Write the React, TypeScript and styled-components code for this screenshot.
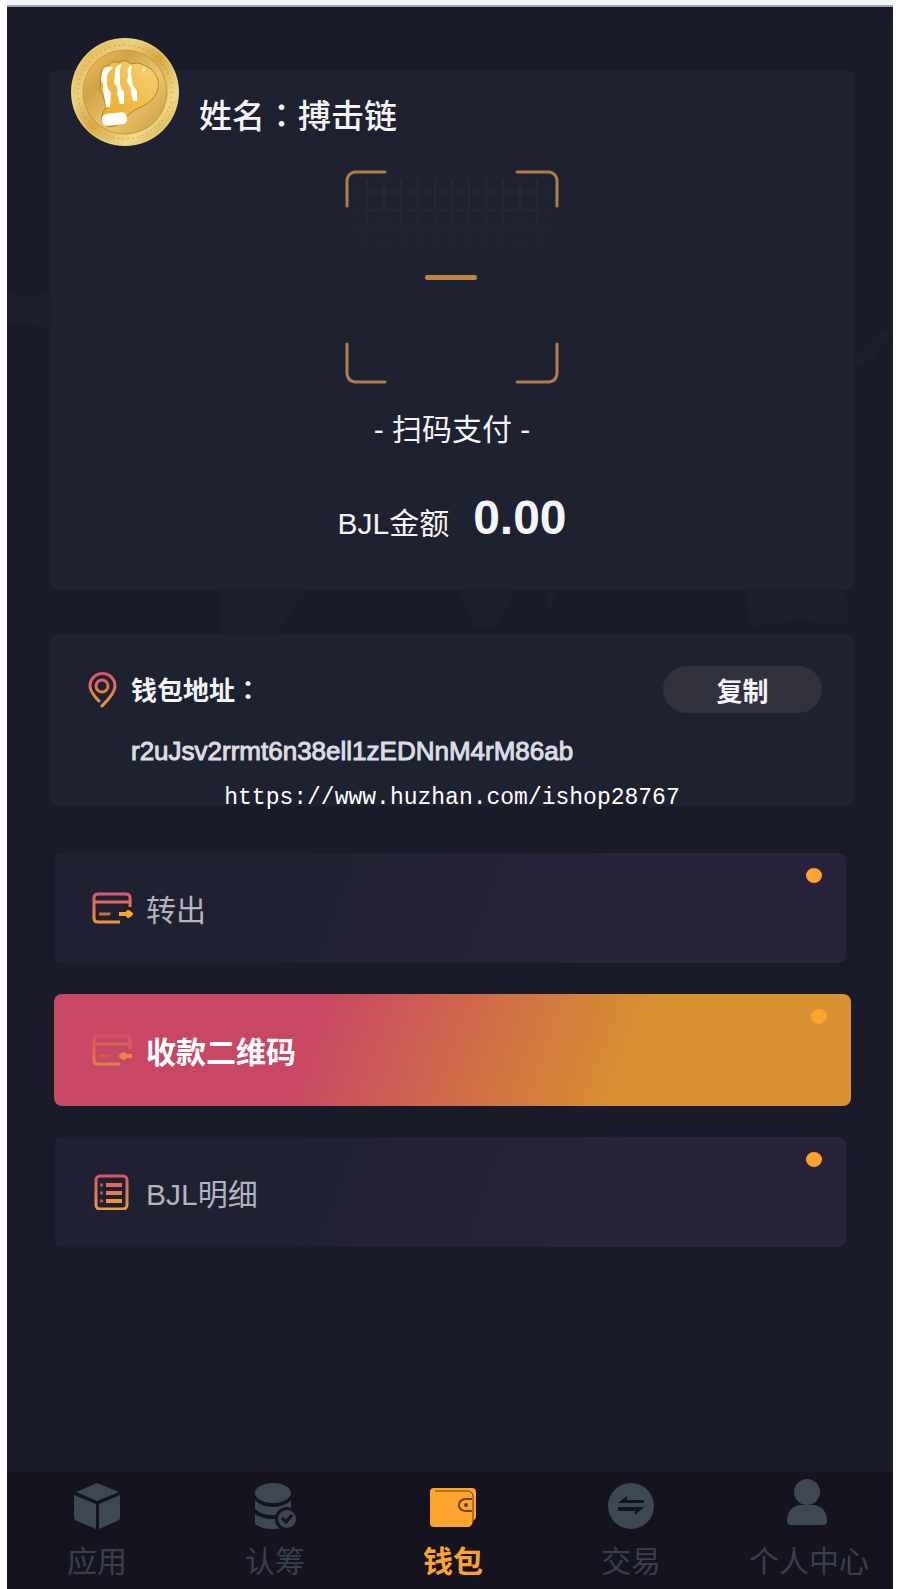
import React from 'react'
import styled, { createGlobalStyle, css } from 'styled-components';

const Theme = {
  colors: {
    bg: '#1a1b29',
    card: '#1e212f',
    bar: '#14131f',
    pill: '#32323e',
    map: '#1c1e2c',
    text: '#f4f4f8',
    address: '#dcdce4',
    muted: '#b4b4bd',
    tab: '#3e4853',
    label: '#36404c',
    orange: '#fca42e',
    frame: '#b07d42',
    pink: '#d9506a',
  },
  font: {
    base: '"Liberation Sans", "Noto Sans CJK SC", sans-serif',
    mono: '"Liberation Mono", monospace',
    small: '26px',
    medium: '30px',
    large: '33px',
    xlarge: '48px',
  },
}

const GlobalStyle = createGlobalStyle`
  * {
    box-sizing: border-box;
  }

  body {
    margin: 0;
    background: #fdfdfe;
    font-family: ${Theme.font.base};
    color: ${Theme.colors.text};
  }

  button {
    border: 0;
    padding: 0;
    font-family: inherit;
    color: inherit;
    cursor: pointer;
  }
`

const Page = styled.div`
  display: flex;
  flex-direction: column;
  min-height: 100vh;
  padding: 0 7px;
`

const TopStrip = styled.div`
  height: 7px;
  background: #f3f4f5;
  border-bottom: 2px solid #9fa5ae;
`

const Screen = styled.main`
  position: relative;
  display: flex;
  flex: 1;
  flex-direction: column;
  background: ${Theme.colors.bg};
`

const MapArt = styled.svg`
  position: absolute;
  top: 0;
  left: 0;
  width: 100%;
  fill: ${Theme.colors.map};
`

const Content = styled.div`
  position: relative;
  display: flex;
  flex: 1;
  flex-direction: column;
  gap: 44px;
  padding: 63px 39px 32px 43px;
`

const Card = styled.section`
  position: relative;
  border-radius: 7px;
  background: ${Theme.colors.card};
`

const PayCard = styled(Card)`
  display: flex;
  flex-direction: column;
  align-items: center;
  padding-bottom: 36px;
`

const Profile = styled.div`
  display: flex;
  align-self: stretch;
  gap: 20px;
  margin-top: -32px;
  padding-left: 21px;
`

const Coin = styled.svg`
  width: 108px;
  height: 108px;
`

const Name = styled.h1`
  margin: 0;
  padding-top: 52px;
  font-size: ${Theme.font.large};
  font-weight: 500;
  line-height: 48px;
`

const Colon = styled.span`
  font-family: "Noto Sans CJK TC", sans-serif;
`

const Scan = styled.svg`
  width: 214px;
  height: 214px;
  margin-top: 24px;
`

const ScanText = styled.p`
  margin: 26px 0 0;
  font-size: ${Theme.font.medium};
  line-height: 40px;
`

const Amount = styled.p`
  display: flex;
  align-items: baseline;
  gap: 24px;
  margin: 38px 0 0;
  font-size: ${Theme.font.medium};
  line-height: 60px;
`

const AmountValue = styled.strong`
  font-size: ${Theme.font.xlarge};
`

const AddressCard = styled(Card)`
  padding: 32px 32px 36px 38px;
`

const AddressHead = styled.div`
  display: flex;
  align-items: center;
  gap: 14px;
`

const PinIcon = styled.svg`
  width: 29px;
  height: 36px;
`

const AddressTitle = styled.h2`
  flex: 1;
  margin: 0;
  font-size: ${Theme.font.small};
  font-weight: 700;
  line-height: 40px;
`

const CopyButton = styled.button`
  width: 159px;
  height: 47px;
  border-radius: 24px;
  background: ${Theme.colors.pill};
  font-size: ${Theme.font.small};
  font-weight: 700;
`

const Address = styled.p`
  margin: 20px 0 0;
  padding-left: 43px;
  font-size: ${Theme.font.small};
  line-height: 37px;
  overflow-wrap: anywhere;
  color: ${Theme.colors.address};
  -webkit-text-stroke: 1px ${Theme.colors.address};
`

const Watermark = styled.span`
  position: absolute;
  right: 0;
  bottom: -8px;
  left: 0;
  font-family: ${Theme.font.mono};
  font-size: 23px;
  line-height: 32px;
  text-align: center;
  color: #fff;
`

const Menu = styled.div`
  display: flex;
  flex-direction: column;
  gap: 31px;
  margin-top: 3px;
  padding: 0 8px 0 4px;
`

const MenuItem = styled.button<{ $active?: boolean }>`
  position: relative;
  display: flex;
  align-items: center;
  gap: 12px;
  height: 110px;
  padding-left: 38px;
  border-radius: 8px;
  background: linear-gradient(110deg, #1f2032 30%, #29223b 72%);
  font-size: ${Theme.font.medium};
  color: ${Theme.colors.muted};

  &::after {
    content: '';
    position: absolute;
    top: 15px;
    right: 24px;
    width: 16px;
    height: 15px;
    border-radius: 50%;
    background: ${Theme.colors.orange};
  }

  ${({ $active }) => $active && css`
    height: 112px;
    margin-right: -5px;
    background: linear-gradient(110deg, #c84763 32%, #d99030 72%);
    font-weight: 700;
    color: #fff;
  `}
`

const MenuIcon = styled.svg<{ $faded?: boolean }>`
  width: 42px;
  height: 36px;
  fill: none;
  stroke: url(#warm);
  stroke-width: 3;
  opacity: ${({ $faded }) => ($faded ? 0.7 : 1)};
`

const TabBar = styled.nav`
  position: relative;
  display: flex;
  justify-content: space-between;
  height: 117px;
  padding: 6px 24px 0 30px;
  background: ${Theme.colors.bar};
`

const Tab = styled.a<{ $active?: boolean }>`
  display: flex;
  flex-direction: column;
  align-items: center;
  width: 120px;
  font-size: ${Theme.font.medium};
  font-weight: ${({ $active }) => ($active ? 700 : 400)};
  line-height: 44px;
  text-decoration: none;
  white-space: nowrap;
  color: ${({ $active }) => ($active ? Theme.colors.orange : Theme.colors.label)};
`

const TabIcon = styled.svg<{ $active?: boolean }>`
  width: 48px;
  height: 54px;
  margin-bottom: 8px;
  fill: ${({ $active }) => ($active ? Theme.colors.orange : Theme.colors.tab)};
`

function WorldMap() {
  return (
    <MapArt viewBox="0 0 886 660" aria-hidden="true">
      <path d="M0 284 L22 290 L43 284 L70 230 L180 205 L300 215 L330 260 L280 330 L240 370 L190 430 L140 390 L90 300 L43 324 L20 316 L0 318Z" />
      <path d="M190 500 L250 520 L308 570 L298 590 L280 610 L262 650 L232 646 L214 626 L212 580Z" />
      <path d="M400 440 L460 420 L530 470 L510 570 L500 604 L484 622 L466 620 L452 582Z" />
      <path d="M540 590 L545 566 L552 570 L546 602 L538 606Z" />
      <path d="M738 584 L780 560 L830 572 L844 600 L838 620 L790 612 L744 622Z" />
      <path d="M848 350 L866 330 L886 318 L886 326 L868 350 L850 360Z" />
    </MapArt>
  )
}

function CoinLogo() {
  return (
    <Coin viewBox="0 0 108 108" aria-hidden="true">
      <defs>
        <linearGradient id="rim" x1="0" y1="0" x2="1" y2="1">
          <stop offset="0" stopColor="#d9aa45" />
          <stop offset="0.3" stopColor="#ecd07c" />
          <stop offset="0.5" stopColor="#d8a843" />
          <stop offset="0.75" stopColor="#f0da86" />
          <stop offset="1" stopColor="#c39132" />
        </linearGradient>
        <linearGradient id="face" x1="0" y1="0" x2="1" y2="1">
          <stop offset="0" stopColor="#e9c763" />
          <stop offset="0.3" stopColor="#d2a347" />
          <stop offset="0.6" stopColor="#e8c86e" />
          <stop offset="1" stopColor="#c9963c" />
        </linearGradient>
        <linearGradient id="fist" x1="0" y1="1" x2="1" y2="0">
          <stop offset="0" stopColor="#f0a51f" />
          <stop offset="1" stopColor="#f2d477" />
        </linearGradient>
      </defs>
      <circle cx="54" cy="54" r="54" fill="url(#rim)" />
      <circle cx="54" cy="54" r="53" fill="none" stroke="#ecd58a" strokeWidth="1" />
      <circle cx="54" cy="54" r="47" fill="none" stroke="#a97c2c" strokeWidth="1" strokeDasharray="1 4" />
      <circle cx="54" cy="54" r="42" fill="url(#face)" stroke="#c39a45" strokeWidth="1" />
      <path
        d="M30 36 Q30 27 38 27 Q42 22 48 25 Q54 20 60 26 L66 25 Q77 27 83 34 Q90 43 86 54 Q82 63 72 68 Q62 72 56 78 Q54 88 37 89 Q28 84 32 74 L35 69 Q33 58 29 52Z"
        fill="url(#fist)" stroke="#b5822f" strokeWidth="1"
      />
      <g fill="#fff">
        <path d="M42 30Q34 27 31 34L30 42Q33 47 32 51L35 69H39L40 55Q35 49 36 42Q35 34 42 30Z" />
        <path d="M50 26Q43 28 44 37L43 45Q48 50 46 55L49 66H53V54Q48 49 49 41Q48 34 50 26Z" />
        <path d="M61 27Q55 29 57 37L56 44Q61 50 60 55L62 63H66V53Q61 48 61 42Q59 35 61 27Z" />
      </g>
      <rect x="31" y="75" width="25" height="12" rx="5" fill="#fff" transform="rotate(-6 44 81)" />
      <path d="M73 29v6M71 32h4" stroke="#fff5cf" strokeWidth="1" />
    </Coin>
  )
}

function ScanFrame() {
  const columns = Array.from({ length: 11 }, (_, i) => 22 + i * 17)
  const rows = [22, 40, 57, 74, 91]

  return (
    <Scan viewBox="0 0 214 214" role="img" aria-label="扫码支付">
      <defs>
        <linearGradient id="fade" x1="0" y1="0" x2="0" y2="1">
          <stop offset="0" stopColor="#fff" />
          <stop offset="1" stopColor="#fff" stopOpacity="0" />
        </linearGradient>
        <mask id="gridMask">
          <rect x="8" y="8" width="198" height="96" fill="url(#fade)" />
        </mask>
      </defs>
      <g stroke="#2c272f" strokeWidth="2" mask="url(#gridMask)">
        {columns.map(x => <line key={x} x1={x} x2={x} y1="10" y2="100" />)}
        {rows.map(y => <line key={y} x1="10" x2="204" y1={y} y2={y} />)}
      </g>
      <g fill="none" stroke={Theme.colors.frame} strokeWidth="3" strokeLinecap="round">
        <path d="M2 36V10Q3 3 10 2H40" />
        <path d="M172 2H204Q211 3 212 10V36" />
        <path d="M2 174V204Q3 211 10 212H40" />
        <path d="M172 212H204Q211 211 212 204V174" />
      </g>
      <rect x="80" y="105" width="52" height="5" rx="2" fill="#bd8440" />
    </Scan>
  )
}

function CardIcon({ incoming }: { incoming?: boolean }) {
  return (
    <MenuIcon viewBox="0 0 42 36" $faded={incoming} aria-hidden="true">
      <path d="M38 17V8Q38 4 34 4H6Q2 4 2 8V28Q2 32 6 32H28" />
      <path d="M2 12H38V13" />
      <path d="M7 24H17V25" stroke="#c8703f" />
      <g stroke={Theme.colors.orange} strokeLinejoin="round">
        {incoming
          ? <path d="M40 24H29M32 22L29 24L32 26Z" strokeWidth="4" />
          : <path d="M27 24H39M36 22L39 24L36 26Z" strokeWidth="4" />}
      </g>
    </MenuIcon>
  )
}

function ListIcon() {
  return (
    <MenuIcon viewBox="0 0 42 36" aria-hidden="true">
      <rect x="4" y="2" width="31" height="33" rx="4" />
      <g strokeWidth="4">
        <path d="M14 11H30" stroke="#dc6a60" />
        <path d="M14 19H30" stroke="#e27f52" />
        <path d="M14 27H30" stroke="#e8953f" />
      </g>
      <path d="M8 11H11M8 19H11M8 27H11" stroke="#a85b50" />
    </MenuIcon>
  )
}

const menuItems = [
  { label: '转出', icon: <CardIcon /> },
  { label: '收款二维码', icon: <CardIcon incoming />, active: true },
  { label: 'BJL明细', icon: <ListIcon /> },
]

const { bar } = Theme.colors

const tabs = [
  {
    label: '应用',
    icon: <>
      <path d="M24 5L46 14L24 23L3 14Z" />
      <path d="M1 17L23 26V51L4 43Q1 42 1 39Z" />
      <path d="M47 17L26 26V51L44 43Q47 42 47 39Z" />
    </>,
  },
  {
    label: '认筹',
    icon: <>
      <ellipse cx="22" cy="15" rx="18" ry="10" />
      <path d="M4 22Q10 29 22 29T40 22V31Q34 37 22 37T4 31Z" />
      <path d="M4 36Q10 41 22 41T40 36V46Q34 51 22 51T4 46Z" />
      <circle cx="36" cy="41" r="12" fill={bar} />
      <circle cx="36" cy="41" r="9" />
      <path d="M31 40L35 44L41 37" fill="none" stroke={bar} strokeWidth="3" />
    </>,
  },
  {
    label: '钱包',
    active: true,
    icon: <>
      <path d="M5 10H43Q47 10 47 14V39Q47 41 44 43Q43 49 39 49H5Q1 49 1 45V14Q1 10 5 10Z" />
      <path d="M6 13H40Q44 14 44 18V44" fill="none" stroke="#6b431d" strokeWidth="1" />
      <path d="M43 21H36Q30 22 30 27T36 33H43" fill="none" stroke="#6b431d" strokeWidth="2" />
      <circle cx="37" cy="27" r="2" fill="#6b431d" />
    </>,
  },
  {
    label: '交易',
    icon: <>
      <circle cx="24" cy="28" r="23" />
      <path d="M11 25L20 18V22H37V25Z" fill={bar} />
      <path d="M11 29H37L28 37V33H11Z" fill={bar} />
    </>,
  },
  {
    label: '个人中心',
    icon: <>
      <circle cx="22" cy="14" r="13" />
      <path d="M14 27H30Q42 30 42 43Q42 47 38 47H6Q2 47 2 43Q2 30 14 27Z" />
    </>,
  },
]

export default function App() {
  return (
    <Page>
      <GlobalStyle />
      <TopStrip />
      <Screen>
        <WorldMap />
        <Content>
          <PayCard>
            <Profile>
              <CoinLogo />
              <Name>姓名<Colon>：</Colon>搏击链</Name>
            </Profile>
            <ScanFrame />
            <ScanText>- 扫码支付 -</ScanText>
            <Amount>BJL金额 <AmountValue>0.00</AmountValue></Amount>
          </PayCard>

          <AddressCard>
            <AddressHead>
              <PinIcon viewBox="0 0 29 36" fill="none" stroke="url(#warm)" strokeWidth="3" strokeLinecap="round" aria-hidden="true">
                <defs>
                  <linearGradient id="warm" gradientUnits="userSpaceOnUse" x1="0" y1="0" x2="0" y2="36">
                    <stop offset="0" stopColor={Theme.colors.pink} />
                    <stop offset="1" stopColor="#e9a03a" />
                  </linearGradient>
                </defs>
                <path d="M11 29Q2 20 2 14A12 12 0 0 1 27 14Q27 21 14 34" />
                <circle cx="14" cy="14" r="6" />
              </PinIcon>
              <AddressTitle>钱包地址<Colon>：</Colon></AddressTitle>
              <CopyButton type="button">复制</CopyButton>
            </AddressHead>
            <Address>r2uJsv2rrmt6n38ell1zEDNnM4rM86ab</Address>
            <Watermark>https://www.huzhan.com/ishop28767</Watermark>
          </AddressCard>

          <Menu>
            {menuItems.map(item => <MenuItem key={item.label} type="button" $active={item.active}>
              {item.icon}
              {item.label}
            </MenuItem>)}
          </Menu>
        </Content>

        <TabBar>
          {tabs.map(tab => <Tab key={tab.label} href="#" $active={tab.active}>
            <TabIcon viewBox="0 0 48 54" $active={tab.active} aria-hidden="true">{tab.icon}</TabIcon>
            {tab.label}
          </Tab>)}
        </TabBar>
      </Screen>
    </Page>
  )
}
